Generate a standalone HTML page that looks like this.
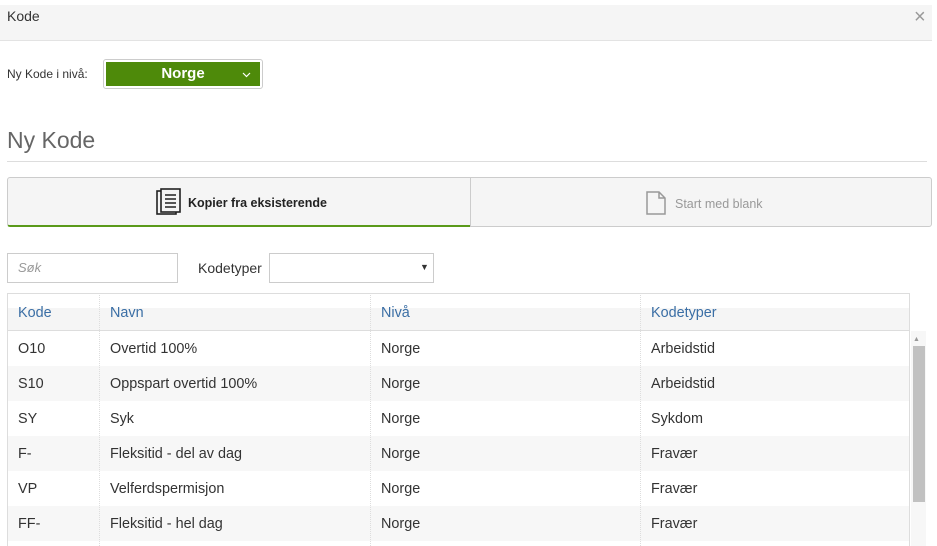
<!DOCTYPE html>
<html><head><meta charset="utf-8"><style>
*{box-sizing:border-box;margin:0;padding:0}
body{width:937px;height:546px;overflow:hidden;background:#fff;font-family:"Liberation Sans",sans-serif;color:#333;position:relative}
.a{position:absolute}
.hdr{left:0;top:5px;width:932px;height:36px;background:#f5f5f5;border-bottom:1px solid #e3e3e3}
.td{position:absolute;font-size:14.4px;color:#333}
</style></head><body>
<div class="a hdr"></div>
<div class="a" style="left:7px;top:8px;font-size:14px;color:#333">Kode</div>
<div class="a" style="left:914px;top:6px;font-size:20px;color:#999;font-weight:300">×</div>

<div class="a" style="left:7px;top:67px;font-size:12px;color:#333">Ny Kode i nivå:</div>
<div class="a" style="left:103px;top:59px;width:160px;height:30px;border:1px solid #ccc;border-radius:3px;background:#fff;padding:2px">
 <div style="width:100%;height:100%;background:#4e8a0a;color:#fff;font-weight:bold;font-size:15px;text-align:center;line-height:24px;position:relative">Norge<svg style="position:absolute;right:9px;top:10px" width="9" height="6" viewBox="0 0 9 6"><path d="M1 1l3.5 3.5L8 1" fill="none" stroke="#fff" stroke-width="1.2"/></svg></div>
</div>

<div class="a" style="left:7px;top:127px;font-size:23px;color:#666">Ny Kode</div>
<div class="a" style="left:7px;top:161px;width:920px;height:1px;background:#ddd"></div>

<div class="a" style="left:7px;top:177px;width:464px;height:50px;background:#f5f5f5;border:1px solid #ccc;border-bottom:2px solid #5a9a1a;border-radius:3px 0 0 3px"></div>
<div class="a" style="left:470px;top:177px;width:462px;height:50px;background:#f5f5f5;border:1px solid #ccc;border-radius:0 3px 3px 0"></div>
<svg class="a" style="left:156px;top:188px" width="26" height="28" viewBox="0 0 26 28"><rect x="1" y="3" width="19" height="23" fill="none" stroke="#222" stroke-width="1.6"/><rect x="5" y="1" width="19" height="23" fill="#f5f5f5" stroke="#222" stroke-width="1.6"/><path d="M9 7h11M9 11h11M9 15h11M9 19h11" stroke="#222" stroke-width="1.6"/></svg>
<div class="a" style="left:188px;top:196px;font-size:12.5px;font-weight:bold;color:#222">Kopier fra eksisterende</div>
<svg class="a" style="left:646px;top:191px" width="20" height="24" viewBox="0 0 20 24"><path d="M1 1h12l6 6v16H1z M13 1v6h6" fill="none" stroke="#999" stroke-width="1.5"/></svg>
<div class="a" style="left:675px;top:197px;font-size:12.5px;color:#999">Start med blank</div>

<div class="a" style="left:7px;top:253px;width:171px;height:30px;border:1px solid #ccc"></div>
<div class="a" style="left:18px;top:260px;font-size:13px;font-style:italic;color:#999">Søk</div>
<div class="a" style="left:198px;top:260px;font-size:14px;color:#333">Kodetyper</div>
<div class="a" style="left:269px;top:253px;width:165px;height:30px;border:1px solid #ccc"></div>
<div class="a" style="left:420px;top:262px;font-size:9px;color:#333">▼</div>

<div class="a" style="left:7px;top:293px;width:903px;height:38px;border:1px solid #ddd;background:linear-gradient(#fff 0,#fff 14px,#f5f5f5 14px)"></div>
<div class="a" style="left:7px;top:331px;width:903px;height:215px;border-left:1px solid #ddd;border-right:1px solid #ddd">
 <div style="height:35px"></div><div style="height:35px;background:#f7f7f7"></div><div style="height:35px"></div><div style="height:35px;background:#f7f7f7"></div><div style="height:35px"></div><div style="height:35px;background:#f7f7f7"></div>
</div>
<div class="a" style="left:99px;top:293px;width:1px;height:253px;border-left:1px dotted #ddd"></div>
<div class="a" style="left:370px;top:293px;width:1px;height:253px;border-left:1px dotted #ddd"></div>
<div class="a" style="left:640px;top:293px;width:1px;height:253px;border-left:1px dotted #ddd"></div>
<div class="a" style="left:911px;top:331px;width:15px;height:215px;background:#f7f7f7"></div>
<div class="a" style="left:913px;top:336px;font-size:7px;color:#999">▲</div>
<div class="a" style="left:913px;top:346px;width:12px;height:156px;background:#c1c1c1"></div>

<div class="td" style="left:18px;top:305px;color:#3a6ea5">Kode</div>
<div class="td" style="left:110px;top:305px;color:#3a6ea5">Navn</div>
<div class="td" style="left:381px;top:305px;color:#3a6ea5">Nivå</div>
<div class="td" style="left:651px;top:305px;color:#3a6ea5">Kodetyper</div>

<div class="td" style="left:18px;top:341px">O10</div><div class="td" style="left:110px;top:341px">Overtid 100%</div><div class="td" style="left:381px;top:341px">Norge</div><div class="td" style="left:651px;top:341px">Arbeidstid</div>
<div class="td" style="left:18px;top:376px">S10</div><div class="td" style="left:110px;top:376px">Oppspart overtid 100%</div><div class="td" style="left:381px;top:376px">Norge</div><div class="td" style="left:651px;top:376px">Arbeidstid</div>
<div class="td" style="left:18px;top:411px">SY</div><div class="td" style="left:110px;top:411px">Syk</div><div class="td" style="left:381px;top:411px">Norge</div><div class="td" style="left:651px;top:411px">Sykdom</div>
<div class="td" style="left:18px;top:446px">F-</div><div class="td" style="left:110px;top:446px">Fleksitid - del av dag</div><div class="td" style="left:381px;top:446px">Norge</div><div class="td" style="left:651px;top:446px">Fravær</div>
<div class="td" style="left:18px;top:481px">VP</div><div class="td" style="left:110px;top:481px">Velferdspermisjon</div><div class="td" style="left:381px;top:481px">Norge</div><div class="td" style="left:651px;top:481px">Fravær</div>
<div class="td" style="left:18px;top:516px">FF-</div><div class="td" style="left:110px;top:516px">Fleksitid - hel dag</div><div class="td" style="left:381px;top:516px">Norge</div><div class="td" style="left:651px;top:516px">Fravær</div>
</body></html>
